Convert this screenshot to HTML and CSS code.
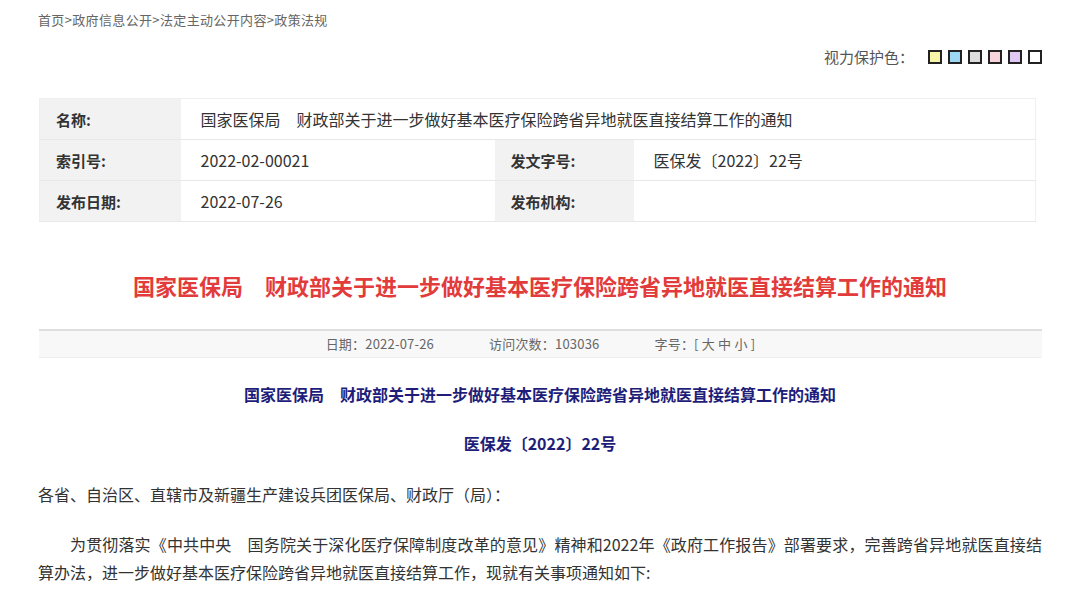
FILE: index.html
```html
<!DOCTYPE html>
<html lang="zh-CN">
<head>
    <meta charset="UTF-8">
    <meta name="viewport" content="width=device-width, initial-scale=1.0">
    <title>政策法规</title>
    <link rel="stylesheet" href="styles.css">
</head>
<body>
    <div class="page">
        <div class="crumb">首页&gt;政府信息公开&gt;法定主动公开内容&gt;政策法规</div>

        <div class="protect">
            <span>视力保护色：</span>
            <span class="swatch sw-yellow"></span>
            <span class="swatch sw-blue"></span>
            <span class="swatch sw-gray"></span>
            <span class="swatch sw-pink"></span>
            <span class="swatch sw-purple"></span>
            <span class="swatch sw-white"></span>
        </div>

        <table class="meta">
            <colgroup>
                <col class="c-label">
                <col class="c-value">
                <col class="c-label2">
                <col>
            </colgroup>
            <tr>
                <th>名称:</th>
                <td colspan="3">国家医保局　财政部关于进一步做好基本医疗保险跨省异地就医直接结算工作的通知</td>
            </tr>
            <tr>
                <th>索引号:</th>
                <td>2022-02-00021</td>
                <th>发文字号:</th>
                <td>医保发〔2022〕22号</td>
            </tr>
            <tr>
                <th>发布日期:</th>
                <td>2022-07-26</td>
                <th>发布机构:</th>
                <td></td>
            </tr>
        </table>

        <h1 class="title">国家医保局　财政部关于进一步做好基本医疗保险跨省异地就医直接结算工作的通知</h1>

        <div class="info-bar">
            <span>日期：2022-07-26</span>
            <span>访问次数：103036</span>
            <span>字号：[ 大 中 小 ]</span>
        </div>

        <div class="article">
            <p class="sub-title">国家医保局　财政部关于进一步做好基本医疗保险跨省异地就医直接结算工作的通知</p>
            <p class="doc-no">医保发〔2022〕22号</p>
            <p class="salute">各省、自治区、直辖市及新疆生产建设兵团医保局、财政厅（局）：</p>
            <p class="para">为贯彻落实《中共中央　国务院关于深化医疗保障制度改革的意见》精神和2022年《政府工作报告》部署要求，完善跨省异地就医直接结算办法，进一步做好基本医疗保险跨省异地就医直接结算工作，现就有关事项通知如下:</p>
        </div>
    </div>
</body>
</html>
```

FILE: styles.css
```css
body {
    margin: 0;
    background: #fff;
    font-family: "Noto Sans CJK SC", "Liberation Sans", sans-serif;
    color: #333;
}
.page {
    width: 1004px;
    margin-left: 38px;
}
.crumb {
    margin-top: 10px;
    font-size: 13px;
    line-height: 20px;
    letter-spacing: 0.35px;
    color: #666;
}
.protect {
    display: flex;
    justify-content: flex-end;
    align-items: center;
    gap: 6px;
    margin-top: 15px;
    font-size: 15px;
    line-height: 24px;
    color: #555;
}
.protect span:first-child {
    margin-right: 8px;
}
.swatch {
    width: 10px;
    height: 10px;
    border: 2px solid #222;
}
.sw-yellow { background: #f8f4a8; }
.sw-blue { background: #9dd7f3; }
.sw-gray { background: #dcdcdc; }
.sw-pink { background: #f8d3dc; }
.sw-purple { background: #e1c7f4; }
.sw-white { background: #fff; }
.meta {
    width: 997px;
    margin: 29px 0 0 1px;
    border-collapse: collapse;
    table-layout: fixed;
    border: 1px solid #efefef;
    font-size: 16px;
}
.c-label { width: 141px; }
.c-value { width: 314px; }
.c-label2 { width: 139px; }
.meta th, .meta td {
    height: 40px;
    padding: 0;
    text-align: left;
    border-bottom: 1px solid #e8e8e8;
    color: #333;
}
.meta th {
    background: #f2f2f2;
    font-weight: bold;
    font-size: 15px;
    padding-left: 16px;
}
.meta td {
    padding-left: 20px;
}
.title {
    margin: 43px 0 0;
    text-align: center;
    font-size: 22px;
    line-height: 40px;
    font-weight: bold;
    color: #e23b3b;
}
.info-bar {
    display: flex;
    justify-content: center;
    gap: 55px;
    margin: 24px 0 0 1px;
    height: 26px;
    line-height: 26px;
    background: #f8f8f8;
    border-top: 2px solid #dedede;
    border-bottom: 1px solid #eee;
    font-size: 13px;
    letter-spacing: 0.2px;
    color: #666;
}
.article p {
    margin: 0;
}
.sub-title, .doc-no {
    text-align: center;
    font-size: 16px;
    line-height: 30px;
    font-weight: bold;
    color: #1e1e7a;
}
.sub-title {
    margin-top: 21px !important;
}
.doc-no {
    margin-top: 19px !important;
}
.salute, .para {
    font-size: 16px;
    line-height: 28px;
    color: #333;
    margin-top: 22px !important;
}
.para {
    text-indent: 2em;
    text-align: justify;
}
```
